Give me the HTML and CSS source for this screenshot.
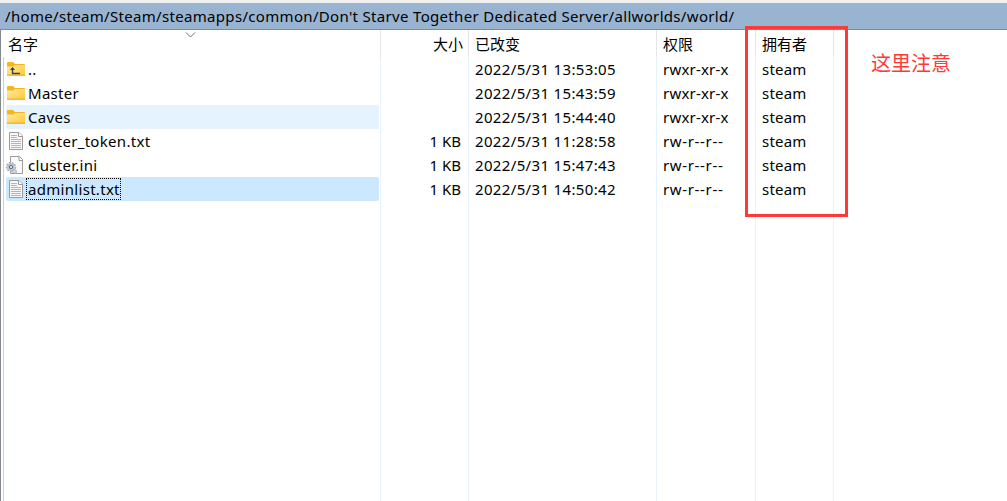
FILE: index.html
```
<!DOCTYPE html>
<html lang="zh-CN">
<head>
    <meta charset="UTF-8">
    <meta name="viewport" content="width=device-width, initial-scale=1.0">
    <title>world</title>
    <link rel="stylesheet" href="styles.css">
</head>
<body>
    <svg width="0" height="0" class="defs">
        <defs>
            <linearGradient id="folderFill" x1="0" y1="0" x2="1" y2="1">
                <stop offset="0" stop-color="#ffe9a2"/>
                <stop offset="1" stop-color="#ffc937"/>
            </linearGradient>
            <symbol id="folder" viewBox="0 0 18 16">
                <path d="M0 2.2Q0 1 1 1H6L8 3H17Q18 3 18 4V14H0Z" fill="#f5b51d"/>
                <path d="M0 5.5H6.5L8 4H18V14.5H0Z" fill="url(#folderFill)"/>
                <path d="M0 14.2H18" stroke="#eba51c" stroke-width="1"/>
            </symbol>
            <symbol id="doc" viewBox="0 0 18 20">
                <path d="M2.5 1.5H12L15.5 5V18.5H2.5Z" fill="#f8f8f8" stroke="#9a9a9a"/>
                <path d="M11.5 1.5V5.5H15.5" fill="#fff" stroke="#9a9a9a"/>
                <path d="M4 4.5H10M4 6.5H10M4 8.5H14M4 10.5H14M4 12.5H14M4 14.5H14M4 16.5H14" stroke="#b4b4b4"/>
            </symbol>
        </defs>
    </svg>

    <div class="toolbar"></div>
    <div class="path">/home/steam/Steam/steamapps/common/Don't Starve Together Dedicated Server/allworlds/world/</div>

    <div class="panel">
        <div class="row head">
            <div class="name">名字<svg class="sort" width="11" height="6" viewBox="0 0 11 6"><path d="M1 .5L5.5 5L10 .5" fill="none" stroke="#6b6b6b"/></svg></div>
            <div class="size">大小</div>
            <div class="date">已改变</div>
            <div class="perm">权限</div>
            <div class="owner">拥有者</div>
        </div>
        <div class="row">
            <div class="name"><div class="item">
                <svg class="icon folder" viewBox="0 0 18 16"><use href="#folder"/><path d="M5.5 7V12.5H13" fill="none" stroke="#33414f" stroke-width="1.3"/><path d="M3 9L5.5 6L8 9Z" fill="#33414f"/></svg>
                <span>..</span>
            </div></div>
            <div class="size"></div>
            <div class="date">2022/5/31 13:53:05</div>
            <div class="perm">rwxr-xr-x</div>
            <div class="owner">steam</div>
        </div>
        <div class="row">
            <div class="name"><div class="item">
                <svg class="icon folder"><use href="#folder"/></svg>
                <span>Master</span>
            </div></div>
            <div class="size"></div>
            <div class="date">2022/5/31 15:43:59</div>
            <div class="perm">rwxr-xr-x</div>
            <div class="owner">steam</div>
        </div>
        <div class="row">
            <div class="name"><div class="item hover">
                <svg class="icon folder"><use href="#folder"/></svg>
                <span>Caves</span>
            </div></div>
            <div class="size"></div>
            <div class="date">2022/5/31 15:44:40</div>
            <div class="perm">rwxr-xr-x</div>
            <div class="owner">steam</div>
        </div>
        <div class="row">
            <div class="name"><div class="item">
                <svg class="icon"><use href="#doc"/></svg>
                <span>cluster_token.txt</span>
            </div></div>
            <div class="size">1 KB</div>
            <div class="date">2022/5/31 11:28:58</div>
            <div class="perm file">rw-r--r--</div>
            <div class="owner">steam</div>
        </div>
        <div class="row">
            <div class="name"><div class="item">
                <svg class="icon" viewBox="0 0 18 20">
                    <path d="M3.5 1.5H12.5L15.5 4.5V18.5H3.5Z" fill="#fafafa" stroke="#9a9a9a"/>
                    <path d="M12 1.5V5.5H15.5" fill="#fff" stroke="#9a9a9a"/>
                    <circle cx="4" cy="12" r="4.4" fill="none" stroke="#a3b0ba" stroke-width="1.6" stroke-dasharray="1.8 1.2"/>
                    <circle cx="4" cy="12" r="3.9" fill="#b9c4cc"/>
                    <circle cx="4" cy="12" r="1.6" fill="#e8edf0" stroke="#5f6b75"/>
                    <circle cx="7.5" cy="16.5" r="1.9" fill="#d4dbe0" stroke="#8f9ba5" stroke-dasharray="1.5 .6"/>
                </svg>
                <span>cluster.ini</span>
            </div></div>
            <div class="size">1 KB</div>
            <div class="date">2022/5/31 15:47:43</div>
            <div class="perm file">rw-r--r--</div>
            <div class="owner">steam</div>
        </div>
        <div class="row">
            <div class="name"><div class="item selected">
                <svg class="icon"><use href="#doc"/></svg>
                <span>adminlist.txt</span>
            </div></div>
            <div class="size">1 KB</div>
            <div class="date">2022/5/31 14:50:42</div>
            <div class="perm file">rw-r--r--</div>
            <div class="owner">steam</div>
        </div>
        <div class="row rest">
            <div class="name"></div>
            <div class="size"></div>
            <div class="date"></div>
            <div class="perm"></div>
            <div class="owner"></div>
        </div>
    </div>

    <div class="mark"></div>
    <div class="note">这里注意</div>
</body>
</html>
```

FILE: styles.css
```
* {
    margin: 0;
    padding: 0;
    box-sizing: border-box;
}
body {
    height: 501px;
    display: flex;
    flex-direction: column;
    position: relative;
    overflow: hidden;
    background: #fff;
    color: #000;
    font: 15px/24px "Noto Sans", "Noto Sans CJK SC", sans-serif;
    white-space: nowrap;
}
.defs {
    position: absolute;
}
.toolbar {
    height: 3px;
    background: #f0f0f0;
}
.path {
    height: 26px;
    padding-left: 5px;
    line-height: 27px;
    background: #99b4d1;
    letter-spacing: 0.32px;
}
.panel {
    flex: 1;
    display: flex;
    flex-direction: column;
    border-top: 1px solid #828790;
    border-left: 1px solid #828790;
}
.row {
    display: grid;
    grid-template-columns: 380px 88px 188px 99px 78px;
    height: 24px;
}
.row > div {
    border-right: 1px solid #e8f2fd;
}
.row .name {
    margin-left: 2px;
    padding: 0 1px 0 2px;
    border-left: 1px solid #bfcdf0;
}
.head {
    height: 27px;
    line-height: 28px;
}
.head > div {
    border-right-color: #e5e5e5;
}
.row.head .name {
    position: relative;
    padding-left: 4px;
    border-left-color: transparent;
}
.sort {
    position: absolute;
    left: 181px;
    top: 2px;
}
.item {
    display: flex;
    height: 24px;
    border-radius: 2px;
}
.item span {
    height: 22px;
    margin-top: 1px;
    padding: 0 1px;
    line-height: 22px;
    letter-spacing: 0.3px;
}
.hover {
    background: #e5f3ff;
}
.selected {
    background: #cce8ff;
}
.selected span {
    margin-left: -1px;
    padding: 0 0 0 1px;
    border: 1px dotted #000;
    line-height: 20px;
}
.icon {
    width: 18px;
    height: 20px;
    margin: 2px 2px 0 1px;
    overflow: visible;
}
.icon.folder {
    height: 16px;
    margin-top: 4px;
}
.size {
    padding-right: 7px;
    text-align: right;
}
.head .size {
    padding-right: 5px;
}
.date {
    padding-left: 6px;
    letter-spacing: 0.35px;
}
.perm, .owner {
    padding-left: 6px;
    letter-spacing: 0.2px;
}
.perm.file {
    letter-spacing: 0.65px;
}
.head .date, .head .perm, .head .owner {
    letter-spacing: 0;
}
.rest {
    flex: 1;
    height: auto;
}
/* red frame around the owner column */
.mark {
    position: absolute;
    left: 745px;
    top: 26px;
    width: 103px;
    height: 191px;
    border: 3px solid #ff3838;
}
.note {
    position: absolute;
    left: 871px;
    top: 52px;
    font-size: 20px;
    color: #ff3838;
}
```
